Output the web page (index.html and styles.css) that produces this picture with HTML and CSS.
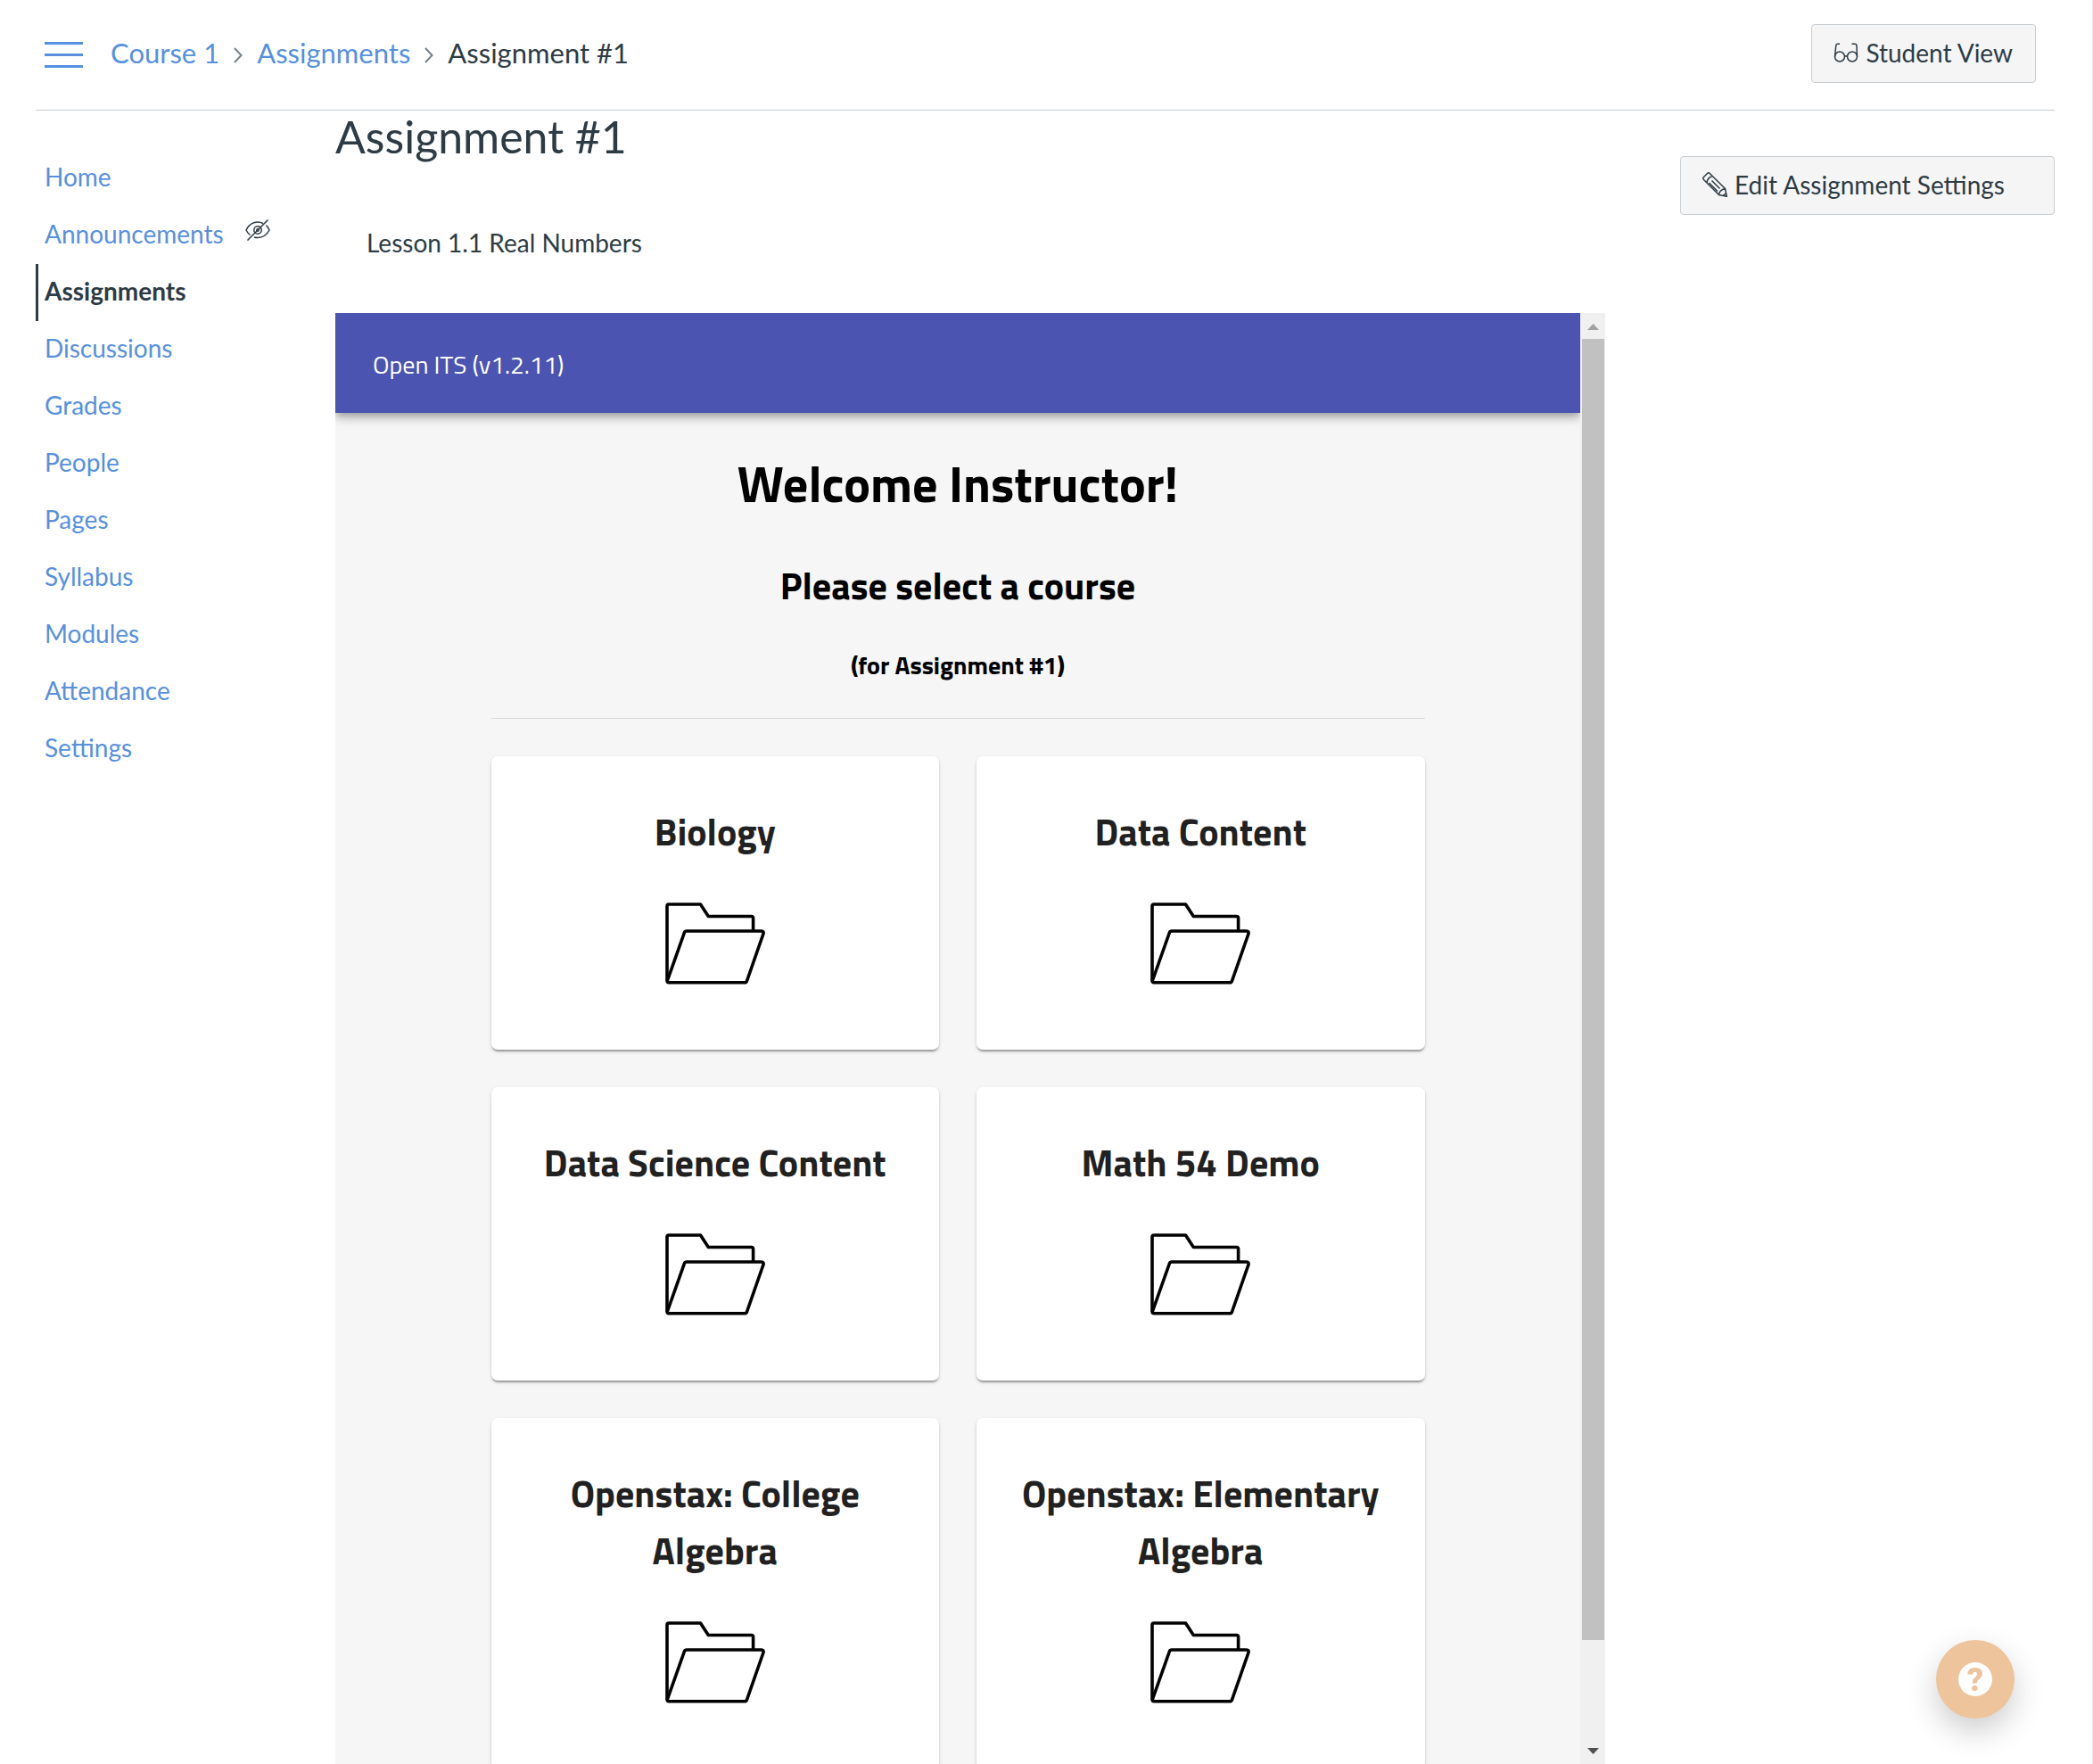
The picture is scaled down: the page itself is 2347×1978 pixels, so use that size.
FILE: index.html
```html
<!DOCTYPE html>
<html lang="en">
<head>
<meta charset="utf-8">
<title>Assignment #1</title>
<meta name="viewport" content="width=device-width, initial-scale=1">
<link rel="stylesheet" href="styles.css">
</head>
<body>
<svg class="sprite" aria-hidden="true">
  <symbol id="folder" viewBox="0 0 112 92">
    <g fill="none" stroke="#000" stroke-width="3.6" stroke-linejoin="round">
      <path d="M2 88V4Q2 2 4 2H39.5L48.3 15.5H96.500Q98.600 15.500 98.600 17.500V32"/>
      <path d="M2.200 88L21.500 33.500Q22 32 24 32H108Q110.500 32 110 35L91.500 88Q91 89.800 89 89.800H4Q2 89.800 2.200 88Z"/>
    </g>
  </symbol>
</svg>
<header class="topbar">
  <button class="menu" type="button" aria-label="Course navigation"><span></span><span></span><span></span></button>
  <nav class="crumbs" aria-label="Breadcrumb">
    <a href="#">Course 1</a>
    <svg class="chevron" viewBox="0 0 10 18" aria-hidden="true"><path d="M1 1L8.500 9L1 17"/></svg>
    <a href="#">Assignments</a>
    <svg class="chevron" viewBox="0 0 10 18" aria-hidden="true"><path d="M1 1L8.500 9L1 17"/></svg>
    <span>Assignment #1</span>
  </nav>
  <button class="btn" type="button">
    <svg class="icon" viewBox="0 0 28 28" aria-hidden="true"><g fill="none" stroke="#2d3b45" stroke-width="1.500"><circle cx="7" cy="18.500" r="5.500"/><circle cx="21" cy="18.500" r="5.500"/><path d="M12.500 18.500Q14 16.800 15.500 18.500M1.500 18.500L2.800 6Q3 4.200 5 4.200H7M26.500 18.500L26 6Q25.800 4.200 23.800 4.200H20.500"/></g></svg>
    Student View
  </button>
</header>
<div class="page">
  <nav class="sidenav" aria-label="Course">
    <ul>
      <li><a href="#">Home</a></li>
      <li><a href="#">Announcements</a>
        <svg class="eye" viewBox="0 0 28 24" aria-hidden="true"><g fill="none" stroke="#2d3b45" stroke-width="1.500"><path d="M20 4.500Q17 3 14 3Q5.500 3 1 12Q3 15.800 5.500 17.500M23.500 6.500Q25.800 9 27 12Q22.500 20.500 14 20.500Q11.800 20.500 10 20"/><circle cx="14" cy="12" r="4.200"/><circle cx="14" cy="12" r="1.200"/><path d="M2.500 23.500L25.500 .500"/></g></svg>
      </li>
      <li class="active"><a href="#" aria-current="page">Assignments</a></li>
      <li><a href="#">Discussions</a></li>
      <li><a href="#">Grades</a></li>
      <li><a href="#">People</a></li>
      <li><a href="#">Pages</a></li>
      <li><a href="#">Syllabus</a></li>
      <li><a href="#">Modules</a></li>
      <li><a href="#">Attendance</a></li>
      <li><a href="#">Settings</a></li>
    </ul>
  </nav>
  <main class="content">
    <h1 class="title">Assignment #1</h1>
    <p class="description">Lesson 1.1 Real Numbers</p>
    <div class="tool">
      <div class="tool-view">
        <div class="tool-bar">Open ITS (v1.2.11)</div>
        <div class="tool-body">
          <h2 class="welcome">Welcome Instructor!</h2>
          <h3 class="prompt">Please select a course</h3>
          <h4 class="context">(for Assignment #1)</h4>
          <hr class="rule">
          <div class="cards">
            <a class="card" href="#"><span>Biology</span><svg class="folder" aria-hidden="true"><use href="#folder"/></svg></a>
            <a class="card" href="#"><span>Data Content</span><svg class="folder" aria-hidden="true"><use href="#folder"/></svg></a>
            <a class="card" href="#"><span>Data Science Content</span><svg class="folder" aria-hidden="true"><use href="#folder"/></svg></a>
            <a class="card" href="#"><span>Math 54 Demo</span><svg class="folder" aria-hidden="true"><use href="#folder"/></svg></a>
            <a class="card" href="#"><span>Openstax: College Algebra</span><svg class="folder" aria-hidden="true"><use href="#folder"/></svg></a>
            <a class="card" href="#"><span>Openstax: Elementary Algebra</span><svg class="folder" aria-hidden="true"><use href="#folder"/></svg></a>
          </div>
        </div>
      </div>
      <div class="scrollbar" aria-hidden="true">
        <svg class="arrow" viewBox="0 0 28 29"><path fill="#a3a3a3" d="M8 19L14.500 12L21 19Z"/></svg>
        <div class="track"><div class="thumb"></div></div>
        <svg class="arrow" viewBox="0 0 28 29"><path fill="#505050" d="M8 11H21L14.500 18Z"/></svg>
      </div>
    </div>
  </main>
  <aside class="actions">
    <button class="btn" type="button">
      <svg class="icon" viewBox="0 0 28 28" aria-hidden="true"><g fill="none" stroke="#2d3b45" stroke-width="1.500" stroke-linejoin="round"><path d="M1 6L6 1Q7 .500 8 1.200L25.500 18.500L27.300 27.300L18.500 25.500L1.500 8.500Q.500 7 1 6ZM5.200 11.500Q5.500 6.500 10.500 5M18.500 25.500Q19 20 25.500 18.500M23.500 26.500L26.500 23.500M7.500 12L17 21.500M10.500 9.500L19.500 18.500"/></g></svg>
      Edit Assignment Settings
    </button>
  </aside>
</div>
<button class="help" type="button" aria-label="Help"><span>?</span></button>
</body>
</html>
```
FILE: styles.css
```css
* {
  box-sizing: border-box;
}

body {
  display: flex;
  flex-direction: column;
  height: 100vh;
  margin: 0;
  padding: 0 42px 0 40px;
  border-right: 1px solid #e8eaec;
  background: #fff;
  color: #2d3b45;
  font-family: Lato, sans-serif;
  font-size: 28px;
  line-height: 36px;
}

a {
  color: #5690df;
  text-decoration: none;
}

button {
  font: inherit;
  color: inherit;
  cursor: pointer;
}

.sprite {
  display: none;
}

/* Top bar */
.topbar {
  display: flex;
  align-items: center;
  padding: 27px 21px 30px 10px;
  border-bottom: 1px solid #c7cdd1;
}

.menu {
  display: flex;
  flex-direction: column;
  gap: 10px;
  width: 43px;
  margin-right: 31px;
  padding: 3px 0 0;
  border: 0;
  background: none;
}

.menu span {
  height: 3px;
  background: #5690df;
}

.crumbs {
  display: flex;
  align-items: center;
  gap: 16px;
  margin-right: auto;
  padding-bottom: 2px;
  font-size: 31px;
}

.chevron {
  width: 10px;
  height: 18px;
  margin-top: 6px;
  fill: none;
  stroke: #73818c;
  stroke-width: 2;
}

.btn {
  display: flex;
  align-items: center;
  gap: 8px;
  padding: 13px 25px 15px 24px;
  border: 1px solid #c7cdd1;
  border-radius: 4px;
  background: #f5f5f5;
}

.icon {
  width: 28px;
  height: 28px;
}

/* Columns */
.page {
  display: flex;
  flex: 1;
  min-height: 0;
}

.sidenav {
  width: 336px;
  padding-top: 44px;
}

.sidenav ul {
  margin: 0;
  padding: 0;
  list-style: none;
}

.sidenav li {
  display: flex;
  gap: 24px;
  padding: 12px 0 16px 7px;
  border-left: 3px solid transparent;
}

.sidenav .active {
  border-color: #2d3b45;
}

.active a {
  color: #2d3b45;
  font-weight: 700;
}

.eye {
  width: 28px;
  height: 24px;
  margin-top: 2px;
}

.content {
  display: flex;
  flex: 1;
  flex-direction: column;
}

.title {
  margin: 0;
  font-size: 50px;
  font-weight: 400;
  line-height: 58px;
}

.description {
  margin: 72px 35px 61px;
}

.actions {
  width: 420px;
  margin-left: 84px;
  padding-top: 51px;
}

.actions .btn {
  width: 100%;
}

/* Embedded tool */
.tool {
  display: flex;
  flex: 1;
  min-height: 0;
  font-family: "Titillium Web", Roboto, sans-serif;
}

.tool-view {
  flex: 1;
  overflow: hidden;
  background: #f6f6f6;
}

.tool-bar {
  padding: 40px 42px 36px;
  background: #4b54b0;
  box-shadow: 0 4px 7px -2px rgba(0, 0, 0, .2), 0 7px 9px rgba(0, 0, 0, .14), 0 2px 18px rgba(0, 0, 0, .12);
  color: #fff;
}

.tool-body {
  width: 75%;
  margin: 0 auto;
  color: #000;
  text-align: center;
}

.welcome,
.prompt,
.context {
  margin: 0;
  font-weight: 700;
}

.welcome {
  padding-top: 40px;
  font-size: 56px;
  line-height: 80px;
}

.prompt {
  padding-top: 41px;
  font-size: 42px;
  line-height: 64px;
}

.context {
  padding-top: 40px;
  font-size: 28px;
  line-height: 36px;
}

.rule {
  margin: 41px 0 42px;
  border: 0;
  border-top: 1px solid #d8d8d8;
}

.cards {
  display: grid;
  grid-template-columns: 1fr 1fr;
  gap: 42px;
}

.card {
  display: flex;
  flex-direction: column;
  align-items: center;
  gap: 48px;
  padding: 52px 40px 73px;
  border-radius: 7px;
  background: #fff;
  box-shadow: 0 4px 2px -2px rgba(0, 0, 0, .2), 0 2px 2px rgba(0, 0, 0, .14), 0 2px 5px rgba(0, 0, 0, .12);
  color: #212121;
  font-size: 42px;
  font-weight: 700;
  line-height: 64px;
}

.folder {
  width: 112px;
  height: 92px;
}

.scrollbar {
  display: flex;
  flex-direction: column;
  width: 28px;
  background: #f0f0f0;
}

.arrow {
  height: 29px;
}

.track {
  flex: 1;
  padding: 0 1px 0 2px;
}

.thumb {
  height: 93%;
  background: #c1c1c1;
}

/* Floating help button */
.help {
  position: fixed;
  right: 88px;
  bottom: 51px;
  display: grid;
  place-items: center;
  width: 88px;
  height: 88px;
  border: 0;
  border-radius: 50%;
  background: #edc49b;
  box-shadow: 0 14px 35px rgba(0, 0, 0, .2);
}

.help span {
  width: 38px;
  height: 38px;
  border-radius: 50%;
  background: #fff;
  color: #edc49b;
  font: 900 36px/40px Roboto, sans-serif;
}
```
